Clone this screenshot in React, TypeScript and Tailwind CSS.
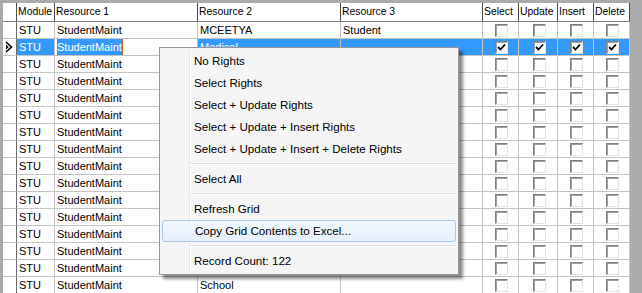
import React from 'react';

interface GridRow {
  module: string;
  resource1: string;
  resource2: string;
  resource3: string;
  checked: boolean;
  selected?: boolean;
}

const rows: GridRow[] = [
  { module: 'STU', resource1: 'StudentMaint', resource2: 'MCEETYA', resource3: 'Student', checked: false },
  { module: 'STU', resource1: 'StudentMaint', resource2: 'Medical', resource3: '', checked: true, selected: true },
  ...Array.from({ length: 13 }, () => ({
    module: 'STU',
    resource1: 'StudentMaint',
    resource2: '',
    resource3: '',
    checked: false,
  })),
  { module: 'STU', resource1: 'StudentMaint', resource2: 'School', resource3: '', checked: false },
];

const cols = 'grid grid-cols-[14px_38px_143px_143px_142px_36px_39px_36px_36px]';

const CheckBox = ({ checked }: { checked: boolean }) => (
  <div className="w-[13px] h-[13px] bg-white border border-t-[#808080] border-l-[#808080] border-r-[#e3e3e3] border-b-[#e3e3e3] shadow-[inset_1px_1px_0_#a0a0a0] flex items-center justify-center">
    {checked && (
      <svg width="9" height="9" viewBox="0 0 9 9">
        <path d="M1 4 L3.5 6.5 L8 1.5" stroke="#000" strokeWidth="1.8" fill="none" />
      </svg>
    )}
  </div>
);

const RowArrow = () => (
  <svg width="8" height="12" viewBox="0 0 8 12">
    <path d="M1 1 L6.5 6 L1 11" stroke="#000" strokeWidth="1.6" fill="none" />
    <path d="M1 3.5 L3.8 6 L1 8.5 Z" fill="#000" />
  </svg>
);

const MenuItem = ({ label, active }: { label: string; active?: boolean }) => (
  <div
    className={
      'h-[22px] flex items-center pl-[32px] rounded-[3px] ' +
      (active
        ? 'border border-[#a8c8ec] bg-gradient-to-b from-[#f2f7fd] to-[#e6effb] pl-[31px]'
        : '')
    }
  >
    {label}
  </div>
);

const Separator = () => (
  <div className="h-[8px] flex flex-col justify-center pl-[27px]">
    <div className="h-px bg-[#e0e0e0]" />
    <div className="h-px bg-white" />
  </div>
);

export default function App() {
  return (
    <div
      className="relative w-[642px] h-[293px] overflow-hidden bg-[#ababab] pt-[3px] pl-[3px] text-[11px] text-black"
      style={{ fontFamily: '"Liberation Sans", Arial, sans-serif' }}
    >
      <div className="w-[627px]">
        <div className={cols + ' h-[19px] bg-white border-b border-[#808080] text-[10.4px]'}>
          <div className="border-r border-[#4a4a4a]" />
          {['Module', 'Resource 1', 'Resource 2', 'Resource 3', 'Select', 'Update', 'Insert', 'Delete'].map((h) => (
            <div key={h} className="border-r border-[#4a4a4a] flex items-center pl-[1px] whitespace-nowrap overflow-hidden">
              {h}
            </div>
          ))}
        </div>

        {rows.map((r, i) => {
          const sel = r.selected;
          const cell = 'border-r border-b border-[#c4c4c4] flex items-center pl-[2px] whitespace-nowrap overflow-hidden';
          const fill = sel ? ' bg-[#3399ff] text-white' : ' bg-white';
          return (
            <div key={i} className={cols + ' h-[17px]'}>
              <div className="border-r border-b border-[#c4c4c4] border-r-[#6a6a6a] bg-white flex items-center pl-[2px]">
                {sel && <RowArrow />}
              </div>
              <div className={cell + fill}>{r.module}</div>
              <div className={cell + ' bg-white'}>
                {sel ? (
                  <span className="bg-[#3399ff] text-white border-r border-[#c06020]">{r.resource1}</span>
                ) : (
                  r.resource1
                )}
              </div>
              <div className={cell + fill}>{r.resource2}</div>
              <div className={cell + fill}>{r.resource3}</div>
              {[0, 1, 2, 3].map((c) => (
                <div key={c} className={cell + fill + ' justify-center pl-0'}>
                  <CheckBox checked={r.checked} />
                </div>
              ))}
            </div>
          );
        })}
      </div>

      <div
        className="absolute left-[159px] top-[47px] w-[300px] h-[228px] bg-[#f5f5f5] border border-[#979797] p-[2px] shadow-[4px_4px_3px_rgba(0,0,0,0.45)] text-[11.6px] text-black"
        style={{ fontFamily: '"Liberation Sans", Arial, sans-serif' }}
      >
        <div className="relative h-full">
          <div className="absolute left-[27px] top-0 bottom-0 w-px bg-[#e2e3e3]" />
          <div className="absolute left-[28px] top-0 bottom-0 w-px bg-white" />
          <div className="relative">
            <MenuItem label="No Rights" />
            <MenuItem label="Select Rights" />
            <MenuItem label="Select + Update Rights" />
            <MenuItem label="Select + Update + Insert Rights" />
            <MenuItem label="Select + Update + Insert + Delete Rights" />
            <Separator />
            <MenuItem label="Select All" />
            <Separator />
            <MenuItem label="Refresh Grid" />
            <MenuItem label="Copy Grid Contents to Excel..." active />
            <Separator />
            <MenuItem label="Record Count: 122" />
          </div>
        </div>
      </div>
    </div>
  );
}
